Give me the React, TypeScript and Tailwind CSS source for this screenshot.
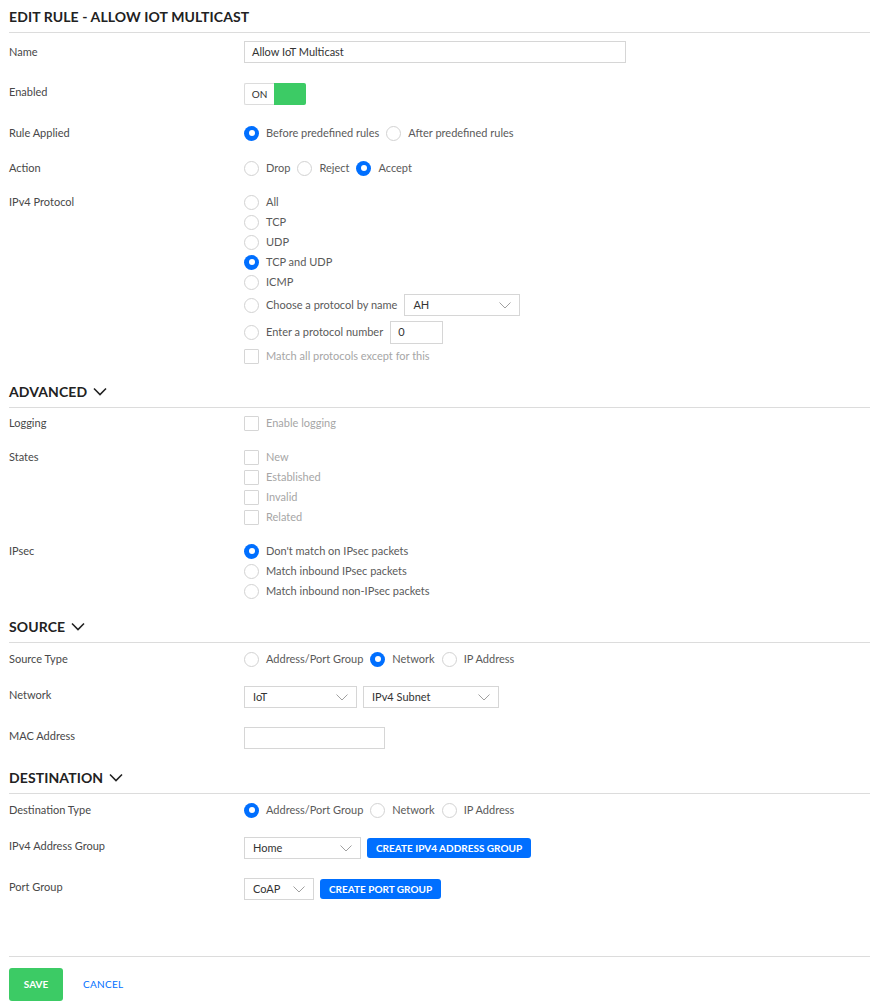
import React from "react";

const Chevron = ({ className = "" }: { className?: string }) => (
  <svg className={className} width="12" height="7" viewBox="0 0 12 7" fill="none">
    <polyline points="0.5,0.5 6,6 11.5,0.5" stroke="#a0a0a0" strokeWidth="1" />
  </svg>
);

const Header = ({ title, chevron, className = "" }: { title: string; chevron?: boolean; className?: string }) => (
  <div className={`flex h-[33px] items-center gap-[6px] border-b border-[#dcdcdc] ${className}`}>
    <span className="text-[14px] font-bold tracking-[0.1px] text-[#222]">{title}</span>
    {chevron && (
      <svg width="14" height="9" viewBox="0 0 14 9" fill="none">
        <polyline points="1,1.5 7,7.5 13,1.5" stroke="#222" strokeWidth="1.6" />
      </svg>
    )}
  </div>
);

const Row = ({
  label,
  children,
  className = "",
  labelClass = "leading-5",
}: {
  label: string;
  children: React.ReactNode;
  className?: string;
  labelClass?: string;
}) => (
  <div className={`flex ${className}`}>
    <div className={`w-[235px] shrink-0 text-[11px] text-[#484848] ${labelClass}`}>{label}</div>
    <div className="flex flex-1 flex-col">{children}</div>
  </div>
);

const Radio = ({ checked }: { checked?: boolean }) =>
  checked ? (
    <span className="flex h-[15px] w-[15px] shrink-0 items-center justify-center rounded-full bg-[#006fff]">
      <span className="h-[6px] w-[6px] rounded-full bg-white" />
    </span>
  ) : (
    <span className="h-[15px] w-[15px] shrink-0 rounded-full border border-[#d2d2d2] bg-white" />
  );

const RadioOpt = ({ checked, text }: { checked?: boolean; text: string }) => (
  <span className="flex h-5 items-center gap-[7px]">
    <Radio checked={checked} />
    <span className="text-[11px] text-[#5a5a5a]">{text}</span>
  </span>
);

const Check = ({ text }: { text: string }) => (
  <span className="flex h-5 items-center gap-[7px]">
    <span className="h-[15px] w-[15px] shrink-0 rounded-[1px] border border-[#d6d6d6] bg-white" />
    <span className="text-[11px] text-[#a6a6a6]">{text}</span>
  </span>
);

const Select = ({ value, className = "" }: { value: string; className?: string }) => (
  <div
    className={`flex h-[22px] items-center justify-between border border-[#d6d6d6] bg-white pl-[8px] pr-[8px] text-[11px] text-[#333] ${className}`}
  >
    <span>{value}</span>
    <Chevron />
  </div>
);

const BlueBtn = ({ text }: { text: string }) => (
  <div className="flex h-5 items-center rounded-[3px] bg-[#006fff] px-[9px] text-[10px] font-bold text-white">
    {text}
  </div>
);

export default function App() {
  return (
    <div className="min-h-screen bg-white pl-[9px] font-['Lato',sans-serif] text-[11px]">
      <Header title="EDIT RULE - ALLOW IOT MULTICAST" />

      <Row label="Name" className="mt-[8px]" labelClass="leading-5 pt-[1px]">
        <div className="flex h-[22px] w-[382px] items-center border border-[#d6d6d6] px-[7px] text-[11px] text-[#333]">
          Allow IoT Multicast
        </div>
      </Row>

      <Row label="Enabled" className="mt-[20px]" labelClass="leading-[18px]">
        <div className="flex h-[22px] w-[62px]">
          <div className="flex w-[30px] items-center justify-center rounded-l-[2px] border-y border-l border-[#dcdcdc] text-[10px] text-[#333]">
            ON
          </div>
          <div className="flex-1 rounded-r-[2px] bg-[#3ccb65]" />
        </div>
      </Row>

      <Row label="Rule Applied" className="mt-[18px]">
        <div className="flex gap-[7px]">
          <RadioOpt checked text="Before predefined rules" />
          <RadioOpt text="After predefined rules" />
        </div>
      </Row>

      <Row label="Action" className="mt-[15px]">
        <div className="flex gap-[7px]">
          <RadioOpt text="Drop" />
          <RadioOpt text="Reject" />
          <RadioOpt checked text="Accept" />
        </div>
      </Row>

      <Row label="IPv4 Protocol" className="mt-[14px]">
        <RadioOpt text="All" />
        <RadioOpt text="TCP" />
        <RadioOpt text="UDP" />
        <RadioOpt checked text="TCP and UDP" />
        <RadioOpt text="ICMP" />
        <div className="flex h-[26px] items-center gap-[7px]">
          <RadioOpt text="Choose a protocol by name" />
          <Select value="AH" className="w-[116px]" />
        </div>
        <div className="flex h-[28px] items-center gap-[7px]">
          <RadioOpt text="Enter a protocol number" />
          <div className="flex h-[23px] w-[53px] items-center border border-[#d6d6d6] px-[7px] text-[11px] text-[#333]">
            0
          </div>
        </div>
        <Check text="Match all protocols except for this" />
      </Row>

      <Header title="ADVANCED" chevron className="mt-[9px]" />

      <Row label="Logging" className="mt-[5px]">
        <Check text="Enable logging" />
      </Row>

      <Row label="States" className="mt-[14px]">
        <Check text="New" />
        <Check text="Established" />
        <Check text="Invalid" />
        <Check text="Related" />
      </Row>

      <Row label="IPsec" className="mt-[14px]">
        <RadioOpt checked text="Don't match on IPsec packets" />
        <RadioOpt text="Match inbound IPsec packets" />
        <RadioOpt text="Match inbound non-IPsec packets" />
      </Row>

      <Header title="SOURCE" chevron className="mt-[9px]" />

      <Row label="Source Type" className="mt-[6px]">
        <div className="flex gap-[7px]">
          <RadioOpt text="Address/Port Group" />
          <RadioOpt checked text="Network" />
          <RadioOpt text="IP Address" />
        </div>
      </Row>

      <Row label="Network" className="mt-[17px]" labelClass="leading-[18px]">
        <div className="flex gap-[6px]">
          <Select value="IoT" className="w-[113px]" />
          <Select value="IPv4 Subnet" className="w-[136px]" />
        </div>
      </Row>

      <Row label="MAC Address" className="mt-[19px]" labelClass="leading-[18px]">
        <div className="h-[22px] w-[141px] border border-[#d6d6d6]" />
      </Row>

      <Header title="DESTINATION" chevron className="mt-[12px]" />

      <Row label="Destination Type" className="mt-[6px]">
        <div className="flex gap-[7px]">
          <RadioOpt checked text="Address/Port Group" />
          <RadioOpt text="Network" />
          <RadioOpt text="IP Address" />
        </div>
      </Row>

      <Row label="IPv4 Address Group" className="mt-[17px]" labelClass="leading-[18px]">
        <div className="flex items-center gap-[6px]">
          <Select value="Home" className="w-[117px]" />
          <BlueBtn text="CREATE IPV4 ADDRESS GROUP" />
        </div>
      </Row>

      <Row label="Port Group" className="mt-[19px]" labelClass="leading-[18px]">
        <div className="flex items-center gap-[6px]">
          <Select value="CoAP" className="w-[70px]" />
          <BlueBtn text="CREATE PORT GROUP" />
        </div>
      </Row>

      <div className="mt-[56px] flex items-center gap-[20px] border-t border-[#dcdcdc] pt-[11px]">
        <div className="flex h-[33px] w-[54px] items-center justify-center rounded-[3px] bg-[#3ccb65] text-[10px] font-bold text-white">
          SAVE
        </div>
        <span className="text-[10px] tracking-[0.3px] text-[#006fff]">CANCEL</span>
      </div>
    </div>
  );
}
